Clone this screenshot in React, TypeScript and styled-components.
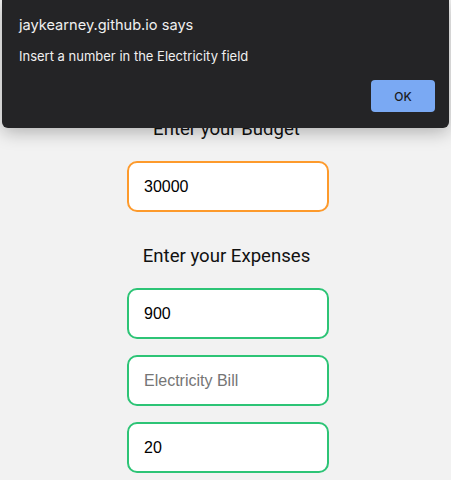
import React from "react";
import styled, { createGlobalStyle } from "styled-components";

const Global = createGlobalStyle`
  html, body { margin: 0; padding: 0; background: #f2f2f2; }
  body { font-family: Roboto, "Liberation Sans", Arial, sans-serif; }
  * { box-sizing: border-box; }
`;

const Page = styled.div`
  position: relative;
  width: 451px;
  height: 480px;
  overflow: hidden;
  background: #f2f2f2;
`;

const Column = styled.main`
  display: flex;
  flex-direction: column;
  align-items: center;
  padding: 118px 0 0 2px;
`;

const Heading = styled.h2<{ $gapTop?: number }>`
  margin: ${(p) => p.$gapTop ?? 0}px 0 21px;
  font-family: Roboto, "Liberation Sans", Arial, sans-serif;
  font-size: 18.6px;
  line-height: 22px;
  font-weight: 400;
  color: #111;
`;

const Field = styled.input<{ $tone: "budget" | "expense" }>`
  width: 202px;
  height: 51px;
  margin: 0 0 16px 3px;
  padding: 0 15px;
  border: 2px solid ${(p) => (p.$tone === "budget" ? "#fd9a2c" : "#2dc476")};
  border-radius: 10px;
  background: #fff;
  font-family: "Liberation Sans", Arial, sans-serif;
  font-size: 16px;
  color: #000;
  outline: none;
  &::placeholder { color: #757575; }
`;

const Dialog = styled.div`
  position: absolute;
  top: 0;
  left: 2px;
  right: 2px;
  height: 128px;
  background: #242426;
  border-radius: 0 0 6px 6px;
  box-shadow: 0 4px 18px rgba(0, 0, 0, 0.28);
  padding: 15px 14px 0 17px;
  display: flex;
  flex-direction: column;
  font-family: Inter, Roboto, "Liberation Sans", sans-serif;
  color: #f0f0f0;
`;

const DialogTitle = styled.div`
  font-size: 14.6px;
  line-height: 20px;
`;

const DialogMessage = styled.div`
  margin-top: 12px;
  font-size: 13px;
  line-height: 18px;
`;

const Actions = styled.div`
  display: flex;
  justify-content: flex-end;
  margin-top: 15px;
`;

const OkButton = styled.button`
  width: 64px;
  height: 32px;
  border: none;
  border-radius: 4px;
  background: #7aa9f3;
  color: #1c1c1e;
  font-family: Inter, Roboto, "Liberation Sans", sans-serif;
  font-size: 12px;
  font-weight: 500;
`;

export default function App() {
  return (
    <Page>
      <Global />
      <Column>
        <Heading>Enter your Budget</Heading>
        <Field $tone="budget" defaultValue="30000" />
        <Heading $gapTop={17}>Enter your Expenses</Heading>
        <Field $tone="expense" defaultValue="900" />
        <Field $tone="expense" placeholder="Electricity Bill" />
        <Field $tone="expense" defaultValue="20" />
      </Column>
      <Dialog>
        <DialogTitle>jaykearney.github.io says</DialogTitle>
        <DialogMessage>Insert a number in the Electricity field</DialogMessage>
        <Actions>
          <OkButton>OK</OkButton>
        </Actions>
      </Dialog>
    </Page>
  );
}
